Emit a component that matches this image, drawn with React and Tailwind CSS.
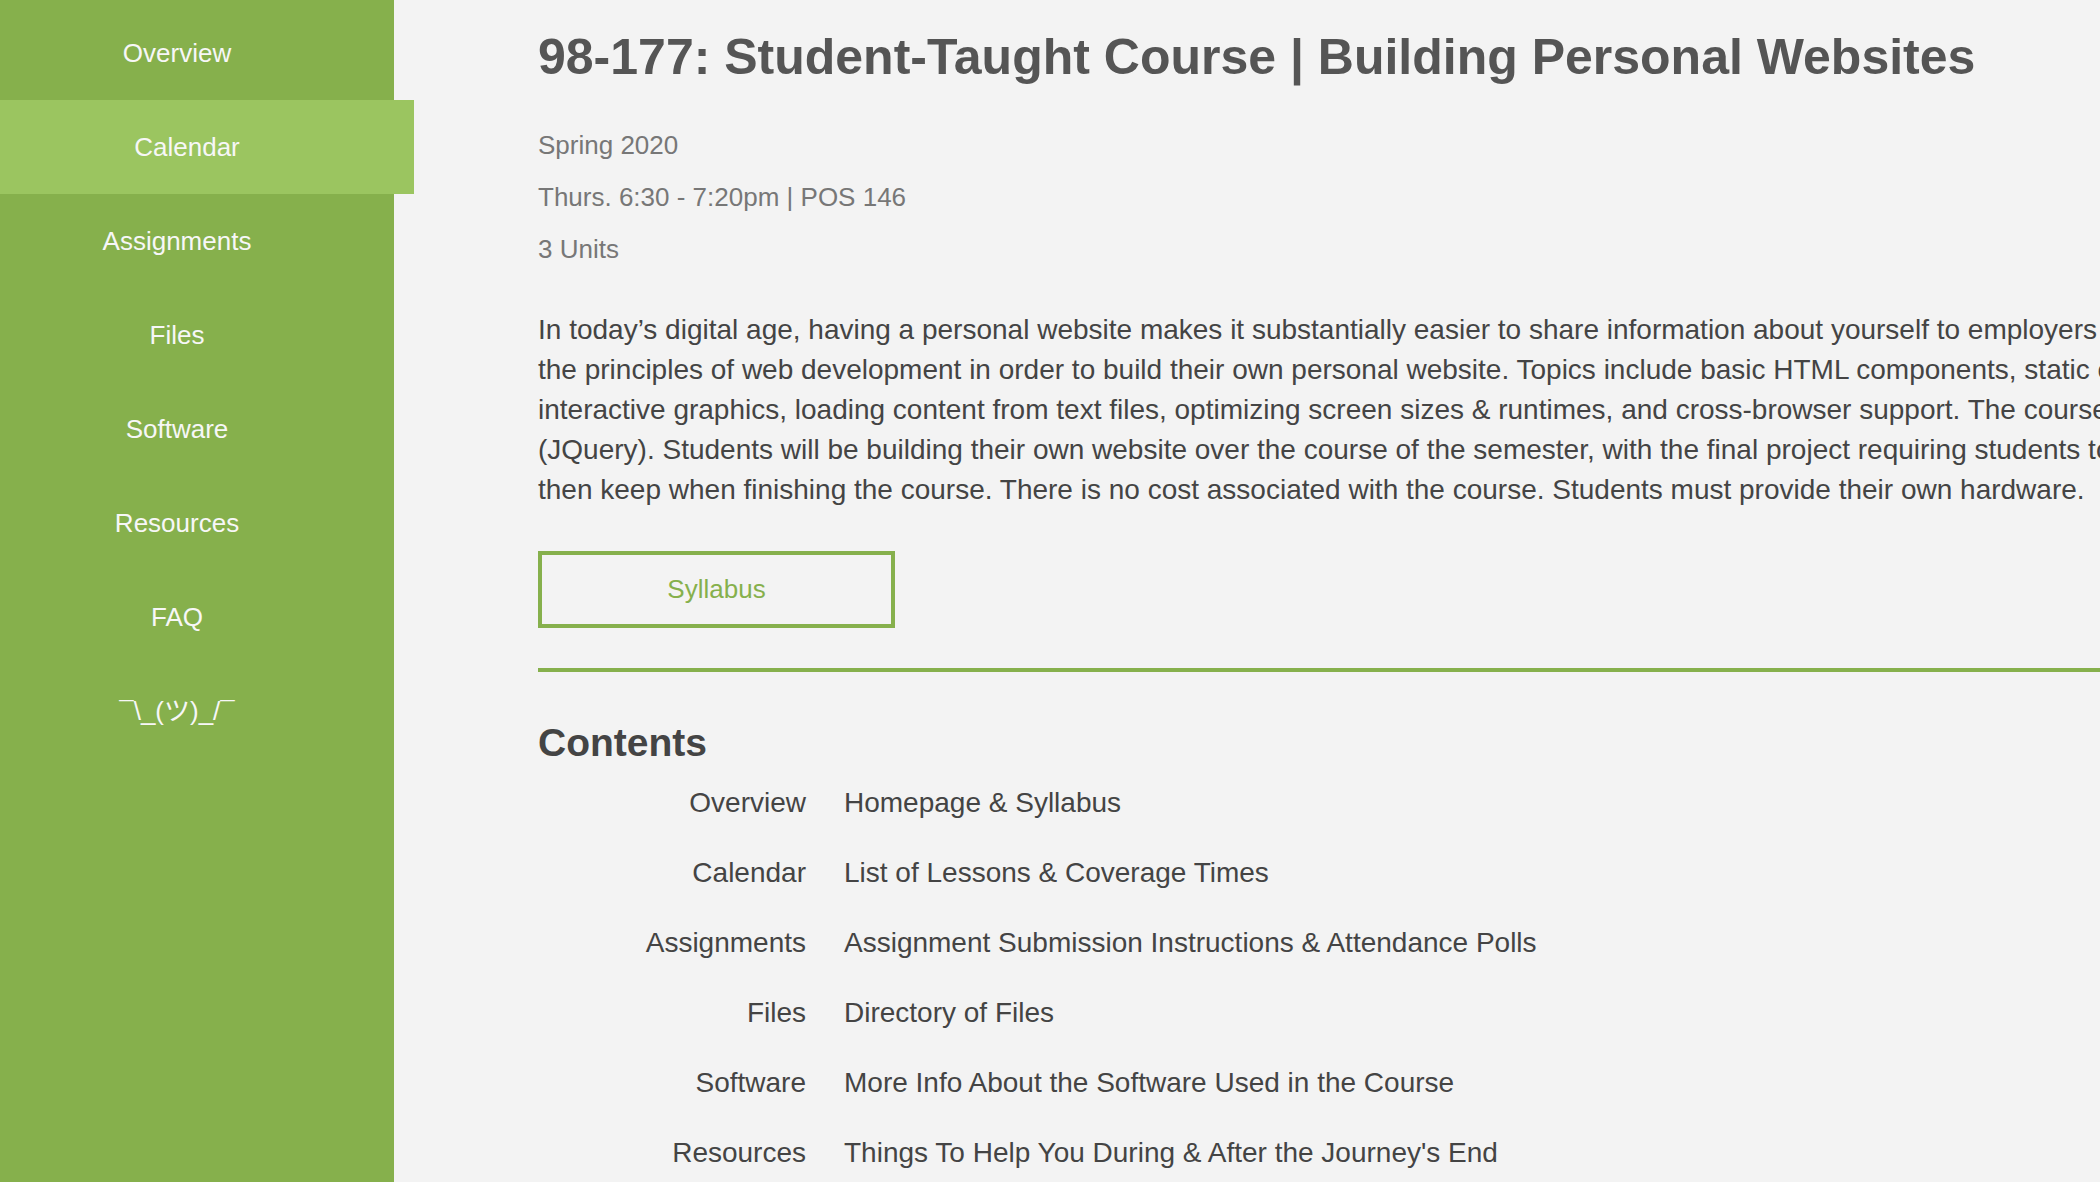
import React from "react";

const nav = ["Overview", "Calendar", "Assignments", "Files", "Software", "Resources", "FAQ", "¯\\_(ツ)_/¯"];

const contents = [
  ["Overview", "Homepage & Syllabus"],
  ["Calendar", "List of Lessons & Coverage Times"],
  ["Assignments", "Assignment Submission Instructions & Attendance Polls"],
  ["Files", "Directory of Files"],
  ["Software", "More Info About the Software Used in the Course"],
  ["Resources", "Things To Help You During & After the Journey's End"],
];

const para = [
  "In today’s digital age, having a personal website makes it substantially easier to share information about yourself to employers and colleagues. This course teaches students",
  "the principles of web development in order to build their own personal website. Topics include basic HTML components, static content & layout, CSS styling,",
  "interactive graphics, loading content from text files, optimizing screen sizes & runtimes, and cross-browser support. The course will also cover JavaScript libraries",
  "(JQuery). Students will be building their own website over the course of the semester, with the final project requiring students to create a website they can",
  "then keep when finishing the course. There is no cost associated with the course. Students must provide their own hardware.",
];

export default function App() {
  return (
    <div
      className="flex w-[2100px] h-[1182px] overflow-hidden bg-[#f3f3f3]"
      style={{ fontFamily: '"Liberation Sans", Arial, "Noto Sans CJK JP", sans-serif' }}
    >
      <nav className="w-[394px] shrink-0 bg-[#86b04c] pt-[6px] relative z-10">
        {nav.map((n) => {
          const active = n === "Calendar";
          return (
            <div
              key={n}
              className={
                active
                  ? "w-[414px] h-[94px] flex items-center justify-center pr-[40px] bg-[#9bc560] text-[26px] text-[#f7f7f7]"
                  : "w-[394px] h-[94px] flex items-center justify-center pr-[40px] text-[26px] text-[#f7f7f7]"
              }
            >
              {n}
            </div>
          );
        })}
      </nav>
      <main className="flex-1 min-w-0 pl-[144px] pt-[27px] overflow-hidden">
        <h1 className="text-[50px] leading-[60px] font-bold text-[#555555] whitespace-nowrap">
          98-177: Student-Taught Course | Building Personal Websites
        </h1>
        <div className="mt-[32px] text-[26px] leading-[52px] text-[#777777]">
          <div>Spring 2020</div>
          <div>Thurs. 6:30 - 7:20pm | POS 146</div>
          <div>3 Units</div>
        </div>
        <div className="mt-[35px] text-[28px] leading-[40px] text-[#444444] whitespace-nowrap">
          {para.map((l, i) => (
            <div key={i}>{l}</div>
          ))}
        </div>
        <div className="mt-[41px] w-[357px] h-[77px] border-4 border-[#86b04c] flex items-center justify-center text-[26px] text-[#86b04c]">
          Syllabus
        </div>
        <div className="mt-[40px] h-[4px] w-full bg-[#86b04c]" />
        <h2 className="mt-[46px] text-[39px] leading-[50px] font-bold text-[#444444]">Contents</h2>
        <div className="grid grid-cols-[268px_1fr] gap-x-[38px] text-[28px] leading-[70px] text-[#444444] whitespace-nowrap">
          {contents.map(([a, b]) => (
            <React.Fragment key={a}>
              <div className="text-right">{a}</div>
              <div>{b}</div>
            </React.Fragment>
          ))}
        </div>
      </main>
    </div>
  );
}
